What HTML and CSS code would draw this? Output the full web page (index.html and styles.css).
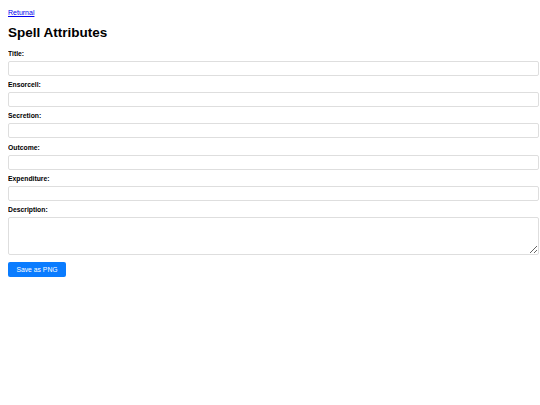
FILE: index.html
```html
<!DOCTYPE html>
<html>
<head>
<meta charset="utf-8">
<link rel="stylesheet" href="styles.css">
</head>
<body>
<a class="back" href="#">Returnal</a>
<h1 class="title">Spell Attributes</h1>
<form class="form">
  <label class="label">Title:</label>
  <input class="field" type="text">
  <label class="label">Ensorcell:</label>
  <input class="field" type="text">
  <label class="label">Secretion:</label>
  <input class="field" type="text">
  <label class="label">Outcome:</label>
  <input class="field" type="text">
  <label class="label">Expenditure:</label>
  <input class="field" type="text">
  <label class="label">Description:</label>
  <textarea class="field area"></textarea>
  <button class="save" type="button">Save as PNG</button>
</form>
</body>
</html>
```
FILE: styles.css
```css
html, body {
  background: #fff;
}
body {
  margin: 8px 1px 8px 8px;
  font-family: "Liberation Sans", Arial, sans-serif;
  color: #000;
}
.back {
  display: block;
  font-size: 7px;
  line-height: 10px;
  color: #0000ee;
}
.title {
  font-size: 13.5px;
  line-height: 18px;
  margin: 6px 0 7px;
  font-weight: bold;
}
.form {
  display: flex;
  flex-direction: column;
  align-items: stretch;
}
.label {
  align-self: flex-start;
  font-size: 6.8px;
  font-weight: bold;
  line-height: 9px;
  margin-bottom: 3px;
}
.field {
  box-sizing: border-box;
  width: 100%;
  height: 15px;
  margin: 0 0 4.2px;
  padding: 2px 4px;
  border: 1px solid #dedede;
  border-radius: 2px;
  font-size: 8px;
  font-family: inherit;
  background: #fff;
}
.area {
  height: 38px;
  margin-bottom: 7.5px;
  resize: vertical;
}
.save {
  align-self: flex-start;
  width: 58px;
  height: 15px;
  padding: 0;
  border: none;
  border-radius: 2px;
  background: #0a7cff;
  color: #fff;
  font-size: 6.8px;
  font-family: inherit;
}
```
